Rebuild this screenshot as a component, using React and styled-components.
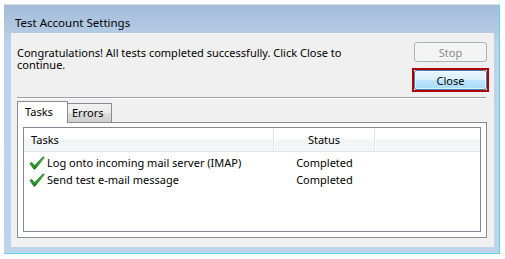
import React from 'react'
import styled, { createGlobalStyle } from 'styled-components'

const GlobalStyle = createGlobalStyle`
  body {
    margin: 0;
    background: #fff;
    font-family: "Noto Sans", "Segoe UI", sans-serif;
    font-size: 11px;
    color: #000;
  }
`

const Window = styled.div`
  margin: 4px 0 0 4px;
  width: 496px;
  height: 250px;
  box-sizing: border-box;
  display: flex;
  flex-direction: column;
  padding: 0 5px 6px 7px;
  background: linear-gradient(to bottom, #a3bdd9 0px, #b3cae4 26px, #bdd3eb 40px, #bed4ec 100%);
  border-top: 1px solid #d4dce6;
  border-right: 1px solid #5fd4e7;
  border-bottom: 1px solid #5fd4e7;
`

const TitleBar = styled.div`
  height: 28px;
  display: flex;
  align-items: flex-end;
  padding: 0 0 3px 4px;
  box-sizing: border-box;
  font-size: 11.5px;
  line-height: 14px;
`

const Client = styled.div`
  flex: 1;
  background: #f0f0f0;
  display: flex;
  flex-direction: column;
  padding: 9px 5px 9px 6px;
`

const TopRow = styled.div`
  display: flex;
  justify-content: space-between;
`

const Message = styled.div`
  width: 340px;
  margin-top: 5px;
  line-height: 12px;
`

const Buttons = styled.div`
  width: 77px;
  display: flex;
  flex-direction: column;
  align-items: center;
`

const Button = styled.div`
  width: 73px;
  height: 20px;
  box-sizing: border-box;
  border-radius: 3px;
  display: flex;
  align-items: center;
  justify-content: center;
  border: 1px solid ${p => (p.$disabled ? '#adb2b5' : '#3c7fb1')};
  color: ${p => (p.$disabled ? '#8b8b8b' : '#000')};
  background: ${p =>
    p.$disabled
      ? '#f4f4f4'
      : 'linear-gradient(to bottom, #eaf6fd 0%, #d9f0fc 50%, #bee6fd 51%, #a7d9f5 100%)'};
  box-shadow: ${p => (p.$disabled ? 'none' : 'inset 0 0 0 1px rgba(255,255,255,0.7)')};
`

const FocusFrame = styled.div`
  margin-top: 6px;
  border: 2px solid #b00000;
`

const Separator = styled.div`
  margin: 5px 3px 0 0;
  border-top: 1px solid #a0a0a0;
  border-bottom: 1px solid #fff;
`

const TabStrip = styled.div`
  display: flex;
  align-items: flex-end;
  margin-top: 2px;
  height: 21px;
`

const Tab = styled.div`
  box-sizing: border-box;
  width: ${p => p.$w}px;
  height: ${p => (p.$active ? 22 : 19)}px;
  border: 1px solid #898c95;
  border-bottom: none;
  ${p => (p.$active ? '' : 'border-left: none;')}
  background: ${p =>
    p.$active ? '#fff' : 'linear-gradient(to bottom, #f2f2f2 0%, #ebebeb 50%, #dddddd 51%, #cfcfcf 100%)'};
  margin-bottom: ${p => (p.$active ? -1 : 0)}px;
  position: relative;
  z-index: ${p => (p.$active ? 1 : 0)};
  padding: ${p => (p.$active ? '3px 0 0 7px' : '2px 0 0 4px')};
  line-height: 14px;
`

const Panel = styled.div`
  flex: 1;
  margin-right: 2px;
  border: 1px solid #898c95;
  background: #fff;
  padding: 4px 5px 5px 5px;
  display: flex;
`

const List = styled.div`
  flex: 1;
  border: 1px solid #828790;
  background: #fff;
`

const Header = styled.div`
  display: grid;
  grid-template-columns: 250px 101px 1fr;
  height: 23px;
  border-bottom: 1px solid #e2e3e5;
  background: linear-gradient(to bottom, #fff 0%, #fff 45%, #f4f5f7 50%, #f4f5f7 100%);
`

const HeaderCell = styled.div`
  display: flex;
  align-items: center;
  justify-content: ${p => (p.$center ? 'center' : 'flex-start')};
  padding-left: ${p => (p.$center ? 0 : 7)}px;
  border-right: ${p => (p.$last ? 'none' : '1px solid #e5e5e5')};
  box-shadow: ${p => (p.$last ? 'none' : '1px 0 0 #fff')};
`

const Rows = styled.div`
  padding-top: 2px;
`

const Row = styled.div`
  display: grid;
  grid-template-columns: 250px 101px 1fr;
  height: 17px;
  align-items: center;
`

const TaskCell = styled.div`
  display: flex;
  align-items: center;
  gap: 2px;
  padding-left: 5px;
`

const StatusCell = styled.div`
  text-align: center;
`

const Check = () => (
  <svg width="16" height="14" viewBox="0 0 16 14">
    <defs>
      <linearGradient id="cg" x1="0" y1="0" x2="0" y2="1">
        <stop offset="0" stopColor="#4cc44c" />
        <stop offset="1" stopColor="#17801a" />
      </linearGradient>
    </defs>
    <path
      d="M0.8 7.6 L2.8 6.4 L5.6 9.6 L14.2 0.8 L15.3 1.6 L6 13.2 L5 13.2 Z"
      fill="url(#cg)"
      stroke="#1a6e1c"
      strokeWidth="0.7"
      strokeLinejoin="round"
    />
  </svg>
)

const tasks = [
  { name: 'Log onto incoming mail server (IMAP)', status: 'Completed' },
  { name: 'Send test e-mail message', status: 'Completed' },
]

export default function App() {
  return (
    <>
      <GlobalStyle />
      <Window>
        <TitleBar>Test Account Settings</TitleBar>
        <Client>
          <TopRow>
            <Message>Congratulations! All tests completed successfully. Click Close to continue.</Message>
            <Buttons>
              <Button $disabled>Stop</Button>
              <FocusFrame>
                <Button>Close</Button>
              </FocusFrame>
            </Buttons>
          </TopRow>
          <Separator />
          <TabStrip>
            <Tab $active $w={51}>Tasks</Tab>
            <Tab $w={44}>Errors</Tab>
          </TabStrip>
          <Panel>
            <List>
              <Header>
                <HeaderCell>Tasks</HeaderCell>
                <HeaderCell $center>Status</HeaderCell>
                <HeaderCell $last />
              </Header>
              <Rows>
                {tasks.map(t => (
                  <Row key={t.name}>
                    <TaskCell>
                      <Check />
                      {t.name}
                    </TaskCell>
                    <StatusCell>{t.status}</StatusCell>
                  </Row>
                ))}
              </Rows>
            </List>
          </Panel>
        </Client>
      </Window>
    </>
  )
}
